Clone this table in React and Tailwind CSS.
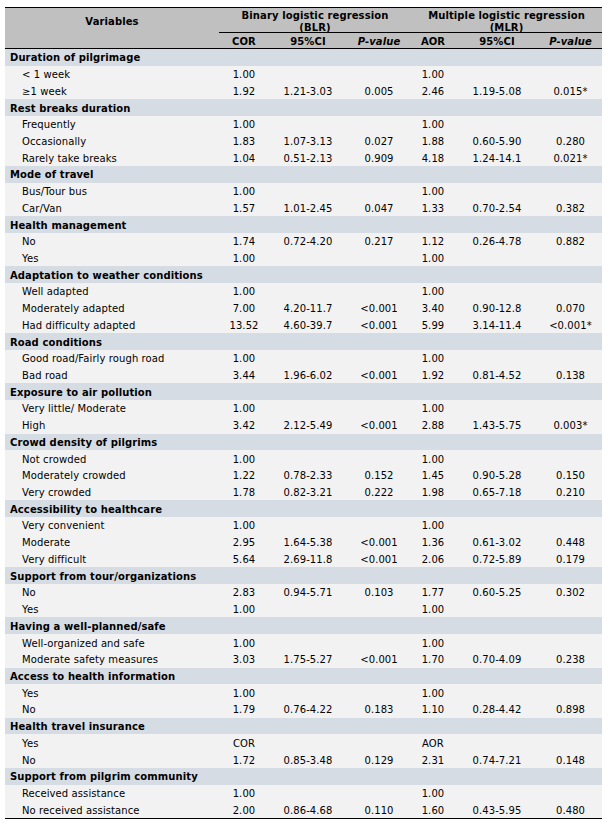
import React from "react";

const data = [
  ["Duration of pilgrimage", [
    ["< 1 week", "1.00", "", "", "1.00", "", ""],
    ["≥1 week", "1.92", "1.21-3.03", "0.005", "2.46", "1.19-5.08", "0.015*"],
  ]],
  ["Rest breaks duration", [
    ["Frequently", "1.00", "", "", "1.00", "", ""],
    ["Occasionally", "1.83", "1.07-3.13", "0.027", "1.88", "0.60-5.90", "0.280"],
    ["Rarely take breaks", "1.04", "0.51-2.13", "0.909", "4.18", "1.24-14.1", "0.021*"],
  ]],
  ["Mode of travel", [
    ["Bus/Tour bus", "1.00", "", "", "1.00", "", ""],
    ["Car/Van", "1.57", "1.01-2.45", "0.047", "1.33", "0.70-2.54", "0.382"],
  ]],
  ["Health management", [
    ["No", "1.74", "0.72-4.20", "0.217", "1.12", "0.26-4.78", "0.882"],
    ["Yes", "1.00", "", "", "1.00", "", ""],
  ]],
  ["Adaptation to weather conditions", [
    ["Well adapted", "1.00", "", "", "1.00", "", ""],
    ["Moderately adapted", "7.00", "4.20-11.7", "<0.001", "3.40", "0.90-12.8", "0.070"],
    ["Had difficulty adapted", "13.52", "4.60-39.7", "<0.001", "5.99", "3.14-11.4", "<0.001*"],
  ]],
  ["Road conditions", [
    ["Good road/Fairly rough road", "1.00", "", "", "1.00", "", ""],
    ["Bad road", "3.44", "1.96-6.02", "<0.001", "1.92", "0.81-4.52", "0.138"],
  ]],
  ["Exposure to air pollution", [
    ["Very little/ Moderate", "1.00", "", "", "1.00", "", ""],
    ["High", "3.42", "2.12-5.49", "<0.001", "2.88", "1.43-5.75", "0.003*"],
  ]],
  ["Crowd density of pilgrims", [
    ["Not crowded", "1.00", "", "", "1.00", "", ""],
    ["Moderately crowded", "1.22", "0.78-2.33", "0.152", "1.45", "0.90-5.28", "0.150"],
    ["Very crowded", "1.78", "0.82-3.21", "0.222", "1.98", "0.65-7.18", "0.210"],
  ]],
  ["Accessibility to healthcare", [
    ["Very convenient", "1.00", "", "", "1.00", "", ""],
    ["Moderate", "2.95", "1.64-5.38", "<0.001", "1.36", "0.61-3.02", "0.448"],
    ["Very difficult", "5.64", "2.69-11.8", "<0.001", "2.06", "0.72-5.89", "0.179"],
  ]],
  ["Support from tour/organizations", [
    ["No", "2.83", "0.94-5.71", "0.103", "1.77", "0.60-5.25", "0.302"],
    ["Yes", "1.00", "", "", "1.00", "", ""],
  ]],
  ["Having a well-planned/safe", [
    ["Well-organized and safe", "1.00", "", "", "1.00", "", ""],
    ["Moderate safety measures", "3.03", "1.75-5.27", "<0.001", "1.70", "0.70-4.09", "0.238"],
  ]],
  ["Access to health information", [
    ["Yes", "1.00", "", "", "1.00", "", ""],
    ["No", "1.79", "0.76-4.22", "0.183", "1.10", "0.28-4.42", "0.898"],
  ]],
  ["Health travel insurance", [
    ["Yes", "COR", "", "", "AOR", "", ""],
    ["No", "1.72", "0.85-3.48", "0.129", "2.31", "0.74-7.21", "0.148"],
  ]],
  ["Support from pilgrim community", [
    ["Received assistance", "1.00", "", "", "1.00", "", ""],
    ["No received assistance", "2.00", "0.86-4.68", "0.110", "1.60", "0.43-5.95", "0.480"],
  ]],
];

const cols = "grid grid-cols-[214px_50px_78px_64px_44px_84px_63px]";

export default function App() {
  return (
    <div
      className="w-[609px] h-[824px] bg-white pl-[5px] pt-[7px] text-black text-[10px] leading-[12px] tracking-[0.1px]"
      style={{ fontFamily: '"DejaVu Sans", Verdana, sans-serif' }}
    >
      <div className="w-[597px] border-t border-black">
        {/* Header */}
        <div className="bg-[#c0c0c0] border-b border-black">
          <div className={`${cols} h-[24px]`}>
            <div className="flex items-center justify-center font-bold pt-[2px]">Variables</div>
            <div className="col-span-3 flex flex-col items-center justify-center font-bold text-center pt-[2px]">
              <span>Binary logistic regression</span>
              <span>(BLR)</span>
            </div>
            <div className="col-span-3 flex flex-col items-center justify-center font-bold text-center pt-[2px]">
              <span>Multiple logistic regression</span>
              <span>(MLR)</span>
            </div>
          </div>
          <div className={`${cols} h-[16px]`}>
            <div></div>
            <div className="col-span-6 grid grid-cols-[50px_78px_64px_44px_84px_63px] border-t border-black font-bold">
              <div className="flex items-center justify-center pt-[2px]">COR</div>
              <div className="flex items-center justify-center pt-[2px]">95%CI</div>
              <div className="flex items-center justify-center italic pt-[2px]">P-value</div>
              <div className="flex items-center justify-center pt-[2px]">AOR</div>
              <div className="flex items-center justify-center pt-[2px]">95%CI</div>
              <div className="flex items-center justify-center italic pt-[2px]">P-value</div>
            </div>
          </div>
        </div>
        {/* Body */}
        <div className="border-b border-black">
          {data.map(([cat, rows]) => (
            <React.Fragment key={cat}>
              <div className="h-[16.72px] bg-[#d6dce4] flex items-center pl-[5px] pt-[2px] font-bold">{cat}</div>
              {rows.map((r, i) => (
                <div key={i} className={`${cols} h-[16.72px] bg-[#f2f2f2]`}>
                  <div className="flex items-center pl-[17px] pt-[2px]">{r[0]}</div>
                  {r.slice(1).map((v, j) => (
                    <div key={j} className="flex items-center justify-center pt-[2px]">{v}</div>
                  ))}
                </div>
              ))}
            </React.Fragment>
          ))}
        </div>
      </div>
    </div>
  );
}
